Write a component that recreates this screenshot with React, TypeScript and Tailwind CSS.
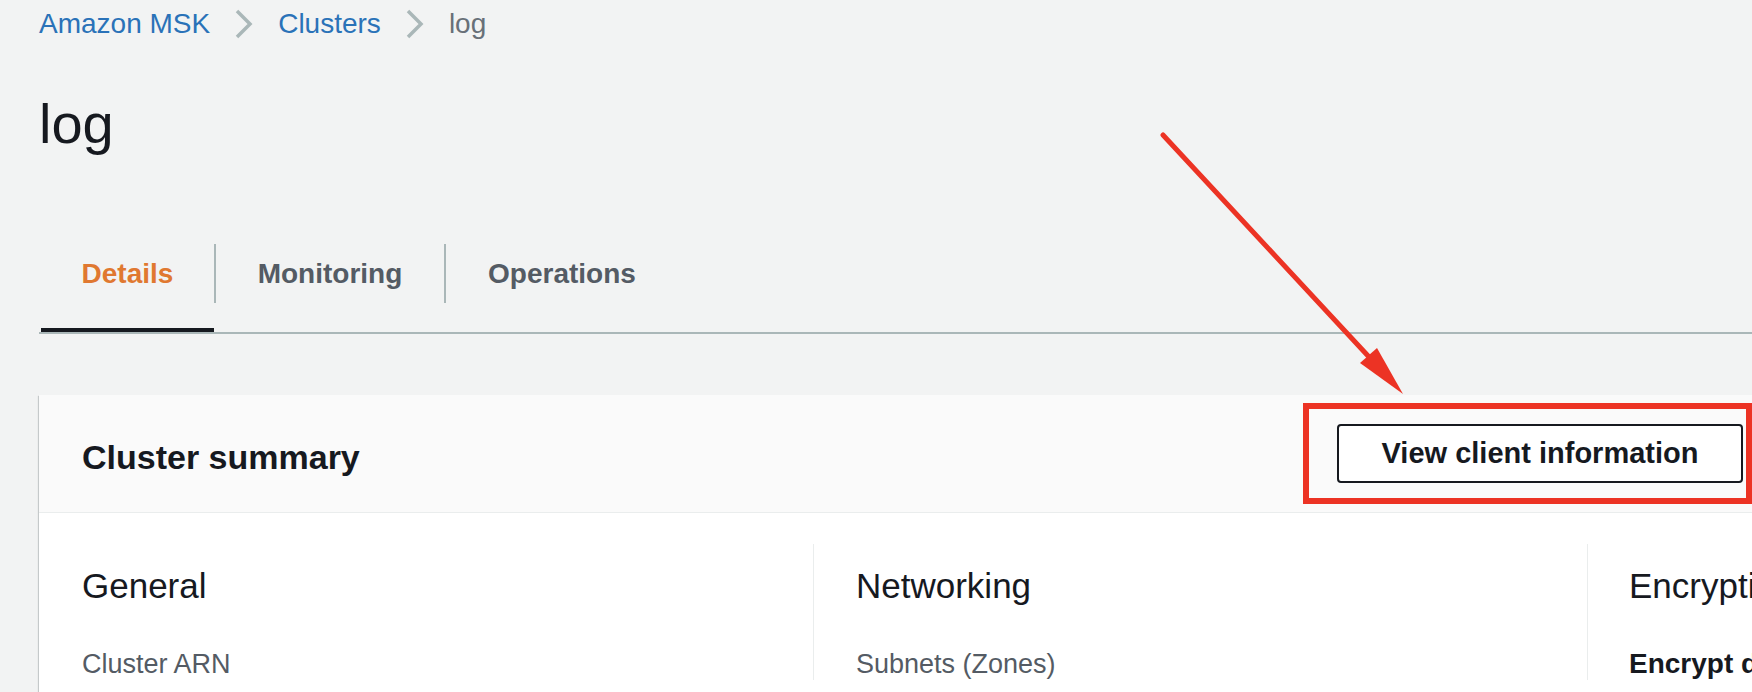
import React from "react";

const font = { fontFamily: '"Liberation Sans", Arial, sans-serif' };

function Chevron() {
  return (
    <svg width="20" height="32" viewBox="0 0 20 32" className="mx-[24px]">
      <path d="M3 3 L16 16 L3 29" fill="none" stroke="#aab7b8" strokeWidth="3.5" />
    </svg>
  );
}

export default function App() {
  return (
    <div className="relative min-h-[692px] overflow-hidden bg-[#f2f3f3] pl-[39px] text-[#16191f]" style={font}>

      {/* BREADCRUMB */}
      <nav className="flex h-[48px] items-center text-[28px]">
        <span className="text-[#2a72b8]">Amazon MSK</span>
        <Chevron />
        <span className="text-[#2a72b8]">Clusters</span>
        <Chevron />
        <span className="text-[#687078]">log</span>
      </nav>

      {/* TITLE */}
      <h1 className="mt-[44px] text-[56px] leading-[64px]">log</h1>

      {/* TABS */}
      <div className="mt-[58px] flex border-b-2 border-[#aab7b8] text-[28px] font-bold leading-[32px]">
        <div className="ml-[2px] w-[173px] border-b-4 border-[#16191f] pt-[30px] pb-[25px]">
          <div className="flex h-[59px] items-center justify-center text-[#e07830]">Details</div>
        </div>
        <div className="w-[230px] border-b-4 border-transparent pt-[30px] pb-[25px]">
          <div className="flex h-[59px] items-center justify-center border-l-2 border-[#aab7b8] text-[#545b64]">Monitoring</div>
        </div>
        <div className="w-[234px] border-b-4 border-transparent pt-[30px] pb-[25px]">
          <div className="flex h-[59px] items-center justify-center border-l-2 border-[#aab7b8] text-[#545b64]">Operations</div>
        </div>
      </div>

      {/* CARD */}
      <div className="mt-[61px] w-[1750px] bg-white shadow-[0_1px_1px_0_rgba(0,28,36,0.25),-1px_1px_1px_0_rgba(0,28,36,0.15)]">
        <div className="flex h-[118px] items-center justify-between border-b border-[#eaeded] bg-[#fafafa] pl-[43px] pr-[46px]">
          <h2 className="pt-[6px] text-[34px] font-bold leading-[40px]">Cluster summary</h2>
          <button className="h-[59px] w-[406px] rounded-[4px] border-2 border-[#16191f] bg-white text-[29px] font-bold">
            View client information
          </button>
        </div>

        <div className="flex overflow-hidden pl-[43px] pt-[31px] pb-[40px]">
          <div className="w-[731px] shrink-0 pt-[22px]">
            <h3 className="text-[35px] leading-[40px]">General</h3>
            <p className="mt-[42px] text-[27px] leading-[32px] text-[#545b64]">Cluster ARN</p>
          </div>
          <div className="w-[774px] shrink-0 border-l border-[#eaeded] pl-[42px] pt-[22px]">
            <h3 className="text-[35px] leading-[40px]">Networking</h3>
            <p className="mt-[42px] text-[27px] leading-[32px] text-[#545b64]">Subnets (Zones)</p>
          </div>
          <div className="shrink-0 border-l border-[#eaeded] pl-[41px] pt-[22px] whitespace-nowrap">
            <h3 className="text-[35px] leading-[40px]">Encryption</h3>
            <p className="mt-[42px] text-[28px] font-bold leading-[32px]">Encrypt data in transit</p>
          </div>
        </div>
      </div>

      {/* ANNOTATION */}
      <div className="absolute left-[1303px] top-[403px] h-[101px] w-[449px] border-[6px] border-[#ec3324]" />
      <svg className="pointer-events-none absolute left-0 top-0" width="1752" height="692">
        <line x1="1163" y1="135" x2="1370" y2="358" stroke="#ec3324" strokeWidth="5" strokeLinecap="round" />
        <polygon points="1403,394 1360,363 1377,348" fill="#ec3324" />
      </svg>
    </div>
  );
}
